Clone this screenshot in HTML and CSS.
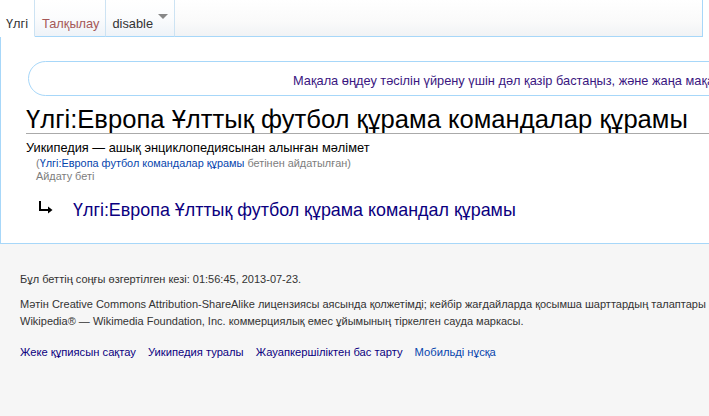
FILE: index.html
```html
<!DOCTYPE html>
<html lang="kk">
<head>
<meta charset="utf-8">
<title>Үлгі:Европа Ұлттық футбол құрама командалар құрамы</title>
<link rel="stylesheet" href="styles.css">
</head>
<body>
<div class="page">
  <div class="head">
    <div class="tabs">
      <div class="tab selected"><span>Үлгі</span></div>
      <div class="tab"><a class="new" href="#">Талқылау</a></div>
      <div class="tab menu"><span>disable</span><span class="caret"></span></div>
      <div class="fill"></div>
    </div>
  </div>
  <div class="content">
    <div class="notice">Мақала өңдеу тәсілін үйрену үшін дәл қазір бастаңыз, және жаңа мақала жазып көріңіз!</div>
    <h1 class="title">Үлгі:Европа Ұлттық футбол құрама командалар құрамы</h1>
    <div class="tagline">Уикипедия — ашық энциклопедиясынан алынған мәлімет</div>
    <div class="redirected">(<a href="#">Үлгі:Европа футбол командалар құрамы</a> бетінен айдатылған)</div>
    <div class="redirect-label">Айдату беті</div>
    <div class="redirect">
      <svg class="redirect-arrow" width="16" height="14" viewBox="0 0 16 14"><path d="M2 0V9H12" fill="none" stroke="#000" stroke-width="2"/><path d="M10 5.5L14.5 9L10 12.5Z" fill="#000"/></svg>
      <a href="#">Үлгі:Европа Ұлттық футбол құрама командал құрамы</a>
    </div>
  </div>
  <div class="footer">
    <p class="line">Бұл беттің соңғы өзгертілген кезі: 01:56:45, 2013-07-23.</p>
    <p class="line">Мәтін <a href="#">Creative Commons Attribution-ShareAlike</a> лицензиясы аясында қолжетімді; кейбір жағдайларда қосымша шарттардың талаптары артылуы мүмкін.<br><a href="#">Wikipedia®</a> — <a href="#">Wikimedia Foundation, Inc.</a> коммерциялық емес ұйымының тіркелген сауда маркасы.</p>
    <div class="places">
      <a href="#" class="visited">Жеке құпиясын сақтау</a>
      <a href="#" class="visited">Уикипедия туралы</a>
      <a href="#" class="visited">Жауапкершіліктен бас тарту</a>
      <a href="#">Мобильді нұсқа</a>
    </div>
  </div>
</div>
</body>
</html>
```
FILE: styles.css
```css
html, body {
  margin: 0;
  padding: 0;
  overflow: hidden;
  background: #f6f6f6;
}
body {
  font-family: "Liberation Sans", Arial, sans-serif;
  color: #222;
}
a { text-decoration: none; }

.page {
  width: 1200px;
}

.head {
  background: #fff;
  height: 36px;
}
.tabs {
  display: flex;
  height: 36px;
  width: 703px;
}
.tab {
  display: flex;
  align-items: flex-end;
  padding: 0 6px 5px 7px;
  font-size: 12.8px;
  color: #333;
  background: linear-gradient(to bottom, #fff 0%, #fbfcfd 50%, #eef3f8 100%);
  border-right: 1px solid #cde3f3;
  border-bottom: 1px solid #a7d7f9;
  box-sizing: border-box;
  height: 37px;
}
.tab.selected {
  background: #fff;
  border-bottom-color: #fff;
  padding: 0 5px 5px 6px;
  width: 35px;
}
.tab.selected span { color: #333; }
.tab a.new { color: #a55858; }
.tab.menu { padding: 0 6px 5px 6px; }
.caret {
  display: inline-block;
  width: 0;
  height: 0;
  border-left: 5px solid transparent;
  border-right: 5px solid transparent;
  border-top: 5px solid #888;
  margin-left: 5px;
  margin-bottom: 12px;
}
.fill {
  flex: 1;
  height: 37px;
  box-sizing: border-box;
  background: linear-gradient(to bottom, #fff 0%, #fafafa 60%, #f1f3f5 100%);
  border-right: 1px solid #a7d7f9;
  border-bottom: 1px solid #a7d7f9;
}

.content {
  background: #fff;
  border-left: 1px solid #a7d7f9;
  border-bottom: 1px solid #a7d7f9;
  padding: 25px 0 22px 25px;
}

.notice {
  margin-left: 2px;
  height: 35px;
  box-sizing: border-box;
  border: 1px solid #a7d7f9;
  border-radius: 18px;
  padding: 2px 0 0 264px;
  font-size: 12.8px;
  line-height: 33px;
  color: #3a167f;
  white-space: nowrap;
}

.title {
  margin: 9px 0 0 0;
  font-weight: normal;
  font-size: 25.6px;
  line-height: 28px;
  color: #000;
  border-bottom: 1px solid #aaa;
  white-space: nowrap;
}

.tagline {
  margin-top: 6px;
  font-size: 12.8px;
  line-height: 15px;
  color: #000;
}
.redirected {
  margin-left: 10px;
  margin-top: 2px;
  font-size: 10.9px;
  line-height: 13px;
  color: #7d7d7d;
}
.redirected a { color: #0645ad; }
.redirect-label {
  margin-left: 10px;
  font-size: 10.9px;
  line-height: 13px;
  color: #7d7d7d;
}
.redirect {
  display: flex;
  align-items: center;
  margin-top: 16px;
  margin-left: 12px;
  gap: 19px;
}
.redirect-arrow { flex: none; margin-top: -4px; }
.redirect a {
  font-size: 17.9px;
  line-height: 22px;
  color: #0b0080;
  white-space: nowrap;
}

.footer {
  padding: 27px 0 0 20px;
  font-size: 11px;
  color: #333;
}
.footer .line {
  margin: 0 0 8px 0;
  line-height: 17px;
  white-space: nowrap;
}
.footer .line a { color: #333; }
.places {
  display: flex;
  gap: 12px;
  margin-top: 14px;
  font-size: 11.2px;
  line-height: 17px;
}
.places a { color: #0645ad; }
.places a.visited { color: #0b0080; }
```
